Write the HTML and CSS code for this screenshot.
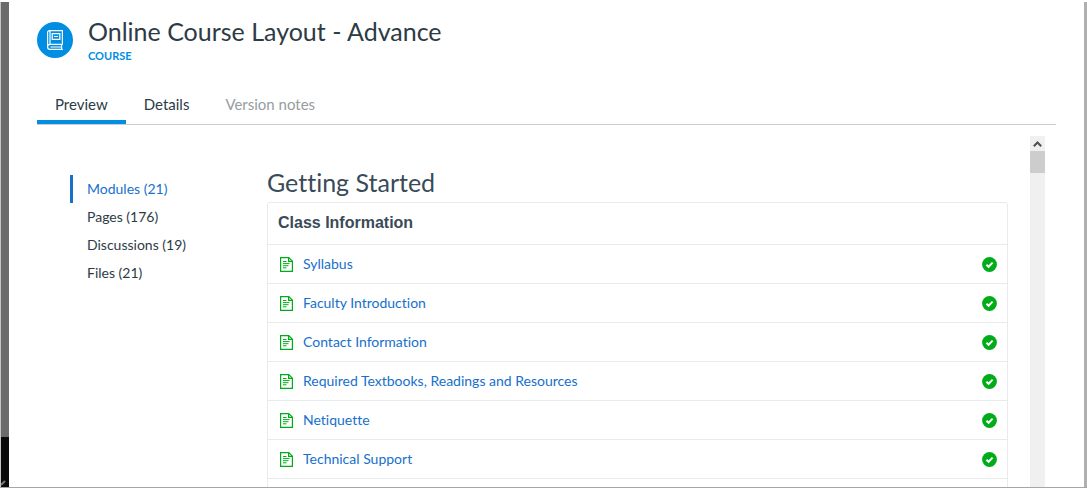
FILE: index.html
```html
<!DOCTYPE html>
<html lang="en">
<head>
  <meta charset="UTF-8">
  <meta name="viewport" content="width=device-width, initial-scale=1.0">
  <title>Online Course Layout - Advance</title>
  <link rel="stylesheet" href="styles.css">
</head>
<body>
  <svg class="sprite" width="0" height="0">
    <symbol id="icon-page" viewBox="0 0 13 15">
      <path d="M.6 .6H8.8L12.4 4.2V14.4H.6Z M8.6 .6V4.4H12.4" fill="none" stroke="currentColor" stroke-width="1.2"/>
      <path d="M3 4.5H6.5M3 6.6H9.5M3 8.7H8.5M3 10.8H6.5" fill="none" stroke="currentColor" stroke-width="1"/>
    </symbol>
    <symbol id="icon-check" viewBox="0 0 15 15">
      <circle cx="7.5" cy="7.5" r="7.4" fill="currentColor"/>
      <path d="M4.4 7.7L6.6 9.8L10.6 5.6" fill="none" stroke="#fff" stroke-width="2"/>
    </symbol>
  </svg>

  <div class="page">
    <div class="backdrop">
      <svg class="corner" width="5" height="8" viewBox="0 0 5 8"><path d="M0 6L4 2" stroke="#777" stroke-width="2"/></svg>
    </div>
    <main class="tray">
      <header class="header">
        <span class="course-icon">
          <svg width="18" height="22" viewBox="0 0 18 22" fill="none" stroke="#fff" stroke-width="1.2">
            <path d="M16.4 15.4V1.6H3.6Q1.6 1.6 1.6 3.6V18Q1.6 20.4 3.8 20.4H16.8M16.4 15.4H3.8Q1.6 15.4 1.6 18M15.6 15.4V20.4M4 1.8V15.2M4.5 18H15.4"/>
            <path d="M6.2 4.6H13.8V10.4H6.2ZM8 7.5H12"/>
          </svg>
        </span>
        <div>
          <h1>Online Course Layout - Advance</h1>
          <p class="type">COURSE</p>
        </div>
      </header>

      <div class="tabs" role="tablist">
        <button class="tab active" role="tab" aria-selected="true">Preview</button>
        <button class="tab" role="tab">Details</button>
        <button class="tab" role="tab" disabled>Version notes</button>
      </div>

      <div class="preview">
        <nav class="side-nav">
          <a class="current" href="#modules">Modules (21)</a>
          <a href="#pages">Pages (176)</a>
          <a href="#discussions">Discussions (19)</a>
          <a href="#files">Files (21)</a>
        </nav>

        <section class="content">
          <h2>Getting Started</h2>
          <div class="module">
            <h3>Class Information</h3>
            <ul>
              <li><svg class="page-icon"><use href="#icon-page"/></svg><a href="#syllabus">Syllabus</a><svg class="check"><use href="#icon-check"/></svg></li>
              <li><svg class="page-icon"><use href="#icon-page"/></svg><a href="#faculty">Faculty Introduction</a><svg class="check"><use href="#icon-check"/></svg></li>
              <li><svg class="page-icon"><use href="#icon-page"/></svg><a href="#contact">Contact Information</a><svg class="check"><use href="#icon-check"/></svg></li>
              <li><svg class="page-icon"><use href="#icon-page"/></svg><a href="#textbooks">Required Textbooks, Readings and Resources</a><svg class="check"><use href="#icon-check"/></svg></li>
              <li><svg class="page-icon"><use href="#icon-page"/></svg><a href="#netiquette">Netiquette</a><svg class="check"><use href="#icon-check"/></svg></li>
              <li><svg class="page-icon"><use href="#icon-page"/></svg><a href="#support">Technical Support</a><svg class="check"><use href="#icon-check"/></svg></li>
              <li></li>
            </ul>
          </div>
        </section>

        <div class="scrollbar">
          <button class="scroll-up" aria-label="Scroll up">
            <svg width="9" height="6" viewBox="0 0 9 6"><path d="M.8 5.2L4.5 1.5L8.2 5.2" fill="none" stroke="#505050" stroke-width="2"/></svg>
          </button>
          <div class="thumb"></div>
        </div>
      </div>
    </main>
  </div>
</body>
</html>
```
FILE: styles.css
```css
* {
  box-sizing: border-box;
}

body {
  margin: 0;
  font-family: Lato, sans-serif;
  font-size: 14px;
  font-variant-ligatures: none;
  line-height: 20px;
  color: #2d3b45;
  background: #fff;
}

h1, h2, h3, p, ul {
  margin: 0;
  padding: 0;
}

a {
  text-decoration: none;
}

button {
  border: 0;
  padding: 0;
  background: none;
  font: inherit;
  font-variant-ligatures: none;
  color: inherit;
}

.sprite {
  position: absolute;
}

.page {
  display: flex;
  height: 100vh;
  padding-top: 2px;
  border-bottom: 1px solid #a6a6a6;
  overflow: hidden;
}

.backdrop {
  flex: none;
  display: flex;
  align-items: flex-end;
  width: 9px;
  border-left: 1px solid #c4c4c4;
  background: linear-gradient(to top, #0a0a0a 50px, #6b6b6b 50px);
}

.tray {
  flex: 1;
  display: flex;
  flex-direction: column;
  min-width: 0;
  padding: 14px 28px 0;
  border-right: 3px solid #b0b0b0;
}

/* Header */
.header {
  display: flex;
  gap: 15px;
}

.course-icon {
  display: flex;
  align-items: center;
  justify-content: center;
  width: 36px;
  height: 36px;
  margin-top: 6px;
  border-radius: 50%;
  background: #008ee2;
}

h1, h2 {
  font-size: 25px;
  font-weight: 400;
  line-height: 32px;
}

h1 {
  line-height: 30px;
}

.type {
  font-size: 11px;
  font-weight: 700;
  line-height: 20px;
  color: #008ee2;
}

/* Tabs */
.tabs {
  display: flex;
  flex: none;
  margin-top: 17px;
  border-bottom: 1px solid #c7cdd1;
}

.tab {
  padding: 11px 18px 6px;
  border-bottom: 4px solid transparent;
  font-size: 15px;
}

.tab.active {
  border-color: #008ee2;
}

.tab:disabled {
  color: #959da2;
}

/* Preview */
.preview {
  flex: 1;
  display: flex;
  min-height: 0;
  margin: 11px 11px 0 0;
  padding-left: 33px;
}

.side-nav {
  display: flex;
  flex-direction: column;
  flex: none;
  width: 197px;
  padding-top: 39px;
}

.side-nav a {
  padding: 4px 14px;
  border-left: 3px solid transparent;
  color: #2d3b45;
}

.side-nav .current {
  border-color: #1770cb;
  color: #1770cb;
}

.content {
  flex: 1;
  min-width: 0;
  padding-top: 30px;
  margin-right: 22px;
  overflow: hidden;
}

h2 {
  color: #394b58;
}

.module {
  margin-top: 4px;
  border: 1px solid #e8eaec;
  border-radius: 3px;
}

.module h3 {
  padding: 10px 10px 11px;
  font-family: "Liberation Sans", Arial, sans-serif;
  font-size: 16px;
  font-weight: 700;
  color: #394b58;
}

.module li {
  display: flex;
  align-items: center;
  height: 39px;
  padding: 0 10px 0 12px;
  border-top: 1px solid #e8eaec;
}

.module a {
  flex: 1;
  margin-left: 10px;
  color: #1770cb;
}

.page-icon {
  width: 13px;
  height: 15px;
  color: #00ac18;
}

.check {
  width: 15px;
  height: 15px;
  color: #00ac18;
}

/* Scrollbar */
.scrollbar {
  flex: none;
  width: 15px;
  background: #f0f0f0;
}

.scroll-up {
  display: flex;
  align-items: center;
  justify-content: center;
  width: 100%;
  height: 15px;
}

.thumb {
  height: 22px;
  background: #cdcdcd;
}
```
